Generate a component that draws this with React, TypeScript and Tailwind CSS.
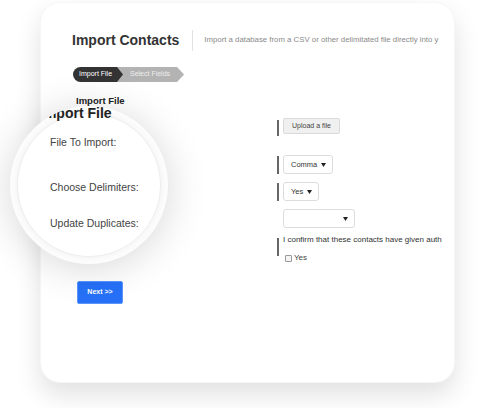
import React from 'react';

const Caret = () => (
  <svg width="5" height="4" viewBox="0 0 5 4" className="shrink-0">
    <path d="M0 0 L5 0 L2.5 4 Z" fill="#222" />
  </svg>
);

function Select({ label, width }: { label: string; width: string }) {
  return (
    <div
      className={`flex items-center justify-between h-[19px] ${width} border border-[#dcdcdc] rounded-[3px] bg-white pl-[7px] pr-[6px] text-[7.5px] text-[#333]`}
    >
      <span>{label}</span>
      <Caret />
    </div>
  );
}

export default function App() {
  return (
    <div className="w-[480px] h-[408px] bg-white relative overflow-hidden font-['Liberation_Sans',Arial,sans-serif]">
      <div className="pl-[40px] pt-[2px]">
        {/* card */}
        <div className="w-[415px] h-[381px] bg-white rounded-[20px] shadow-[0_12px_26px_rgba(0,0,0,0.12)] border border-[#f6f6f6] overflow-hidden">
          {/* header */}
          <div className="flex items-center h-[22px] mt-[26px] pl-[31px] pr-[12px]">
            <h1 className="text-[14px] leading-[18px] font-bold text-[#333] whitespace-nowrap">Import Contacts</h1>
            <div className="ml-[13px] w-px h-[21px] bg-[#e2e2e2] shrink-0" />
            <p className="ml-[11px] flex-1 min-w-0 overflow-hidden whitespace-nowrap text-[7.8px] text-[#8a8a8a]">
              Import a database from a CSV or other delimitated file directly into y
            </p>
          </div>

          {/* breadcrumb */}
          <div className="flex mt-[16px] ml-[32px] h-[15px]">
            <div className="relative z-10 flex items-center h-full w-[50px] pl-[6px] bg-[#333] rounded-l-full text-white text-[7px] [clip-path:polygon(0_0,calc(100%_-_6px)_0,100%_50%,calc(100%_-_6px)_100%,0_100%)]">
              Import File
            </div>
            <div className="flex items-center h-full w-[67px] -ml-[6px] pl-[13px] bg-[#b3b3b3] text-[#eeeeee] text-[7px] [clip-path:polygon(0_0,calc(100%_-_7px)_0,100%_50%,calc(100%_-_7px)_100%,0_100%)]">
              Select Fields
            </div>
          </div>

          <h2 className="mt-[14px] ml-[35px] text-[9.5px] leading-[10px] font-bold text-[#222]">Import File</h2>

          {/* form */}
          <div className="flex mt-[10px]">
            <div className="w-[236px] pl-[35px] flex flex-col text-[8px] text-[#444]">
              <span className="mt-[4px]">File To Import:</span>
              <span className="mt-[30px]">Choose Delimiters:</span>
              <span className="mt-[20px]">Update Duplicates:</span>
            </div>
            <div className="flex flex-col">
              <div className="flex items-center">
                <div className="w-[2px] h-[16px] bg-[#666] mt-[4px]" />
                <div className="ml-[4px] h-[16px] px-[8px] flex items-center bg-[#f0f0f0] border border-[#dadada] rounded-[2px] text-[7px] text-[#444]">
                  Upload a file
                </div>
              </div>
              <div className="flex items-center mt-[19px]">
                <div className="w-[2px] h-[18px] bg-[#666]" />
                <div className="ml-[4px]">
                  <Select label="Comma" width="w-[50px]" />
                </div>
              </div>
              <div className="flex items-center mt-[8px]">
                <div className="w-[2px] h-[18px] bg-[#666]" />
                <div className="ml-[4px]">
                  <Select label="Yes" width="w-[36px]" />
                </div>
              </div>
              <div className="flex items-center mt-[8px] ml-[6px]">
                <Select label="" width="w-[72px]" />
              </div>
              <div className="flex mt-[7px]">
                <div className="w-[2px] h-[18px] bg-[#666] mt-[3px]" />
                <div className="ml-[4px] flex flex-col w-[160px] overflow-hidden">
                  <span className="text-[8px] leading-[10px] text-[#333] whitespace-nowrap">
                    I confirm that these contacts have given auth
                  </span>
                  <div className="flex items-center mt-[9px] ml-[2px] h-[8px]">
                    <div className="w-[7px] h-[7px] border border-[#999] rounded-[1px] bg-[#f4f4f4]" />
                    <span className="ml-[2px] text-[8px] text-[#444]">Yes</span>
                  </div>
                </div>
              </div>
            </div>
          </div>

          <button className="mt-[19px] ml-[36px] w-[46px] h-[23px] bg-[#2671f8] border border-[#5b95ff] rounded-[2px] text-white text-[7px] font-bold">
            Next &gt;&gt;
          </button>
        </div>
      </div>

      {/* magnifier */}
      <div className="absolute left-[10px] top-[106px] w-[158px] h-[158px] rounded-full bg-[#fcfcfc] shadow-[0_4px_40px_rgba(0,0,0,0.16)] overflow-hidden">
        <div className="absolute inset-[7px] rounded-full bg-white border border-[#ededed] shadow-[0_0_6px_rgba(0,0,0,0.05)]" />
        <div className="relative flex flex-col pl-[40px]">
          <h2 className="-ml-[10px] text-[14px] leading-[14px] font-bold text-[#222] whitespace-nowrap">Import File</h2>
          <span className="mt-[16px] text-[10.5px] leading-[13px] text-[#444]">File To Import:</span>
          <span className="mt-[32px] text-[10.5px] leading-[13px] text-[#444]">Choose Delimiters:</span>
          <span className="mt-[23px] text-[10.5px] leading-[13px] text-[#444]">Update Duplicates:</span>
        </div>
      </div>
    </div>
  );
}
